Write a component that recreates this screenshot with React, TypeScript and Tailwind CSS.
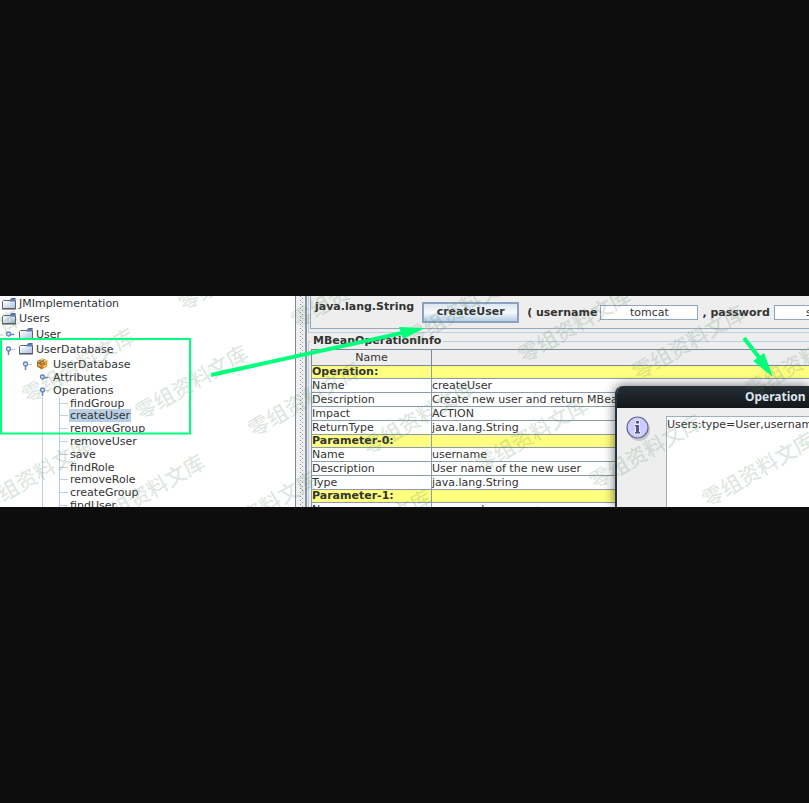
import React from "react";

type Handle = "open" | "closed";

interface Node {
  label: string;
  handle?: Handle;
  selected?: boolean;
}

const rootNodes: (Node & { pad: string })[] = [
  { label: "JMImplementation", pad: "pl-[2px]" },
  { label: "Users", pad: "pl-[2px]" },
  { label: "User", handle: "closed", pad: "pl-[5px]" },
  { label: "UserDatabase", handle: "open", pad: "pl-[5px]" },
];

const operations: Node[] = [
  { label: "findGroup" },
  { label: "createUser", selected: true },
  { label: "removeGroup" },
  { label: "removeUser" },
  { label: "save" },
  { label: "findRole" },
  { label: "removeRole" },
  { label: "createGroup" },
  { label: "findUser" },
];

const info: [string, string][] = [
  ["Operation:", ""],
  ["Name", "createUser"],
  ["Description", "Create new user and return MBean name"],
  ["Impact", "ACTION"],
  ["ReturnType", "java.lang.String"],
  ["Parameter-0:", ""],
  ["Name", "username"],
  ["Description", "User name of the new user"],
  ["Type", "java.lang.String"],
  ["Parameter-1:", ""],
  ["Name", "password"],
];

function FolderIcon() {
  return (
    <svg width="14" height="12" viewBox="0 0 14 12" className="mr-[3px] shrink-0">
      <defs>
        <linearGradient id="folder" x1="0" y1="0" x2="1" y2="1">
          <stop offset="0.1" stopColor="#ffffff" />
          <stop offset="1" stopColor="#a3bfe0" />
        </linearGradient>
      </defs>
      <path d="M0.5 10.5V3.5L1.5 2.5H13.5V10.5Z" fill="url(#folder)" stroke="#62646c" />
      <path d="M7.5 3.5L9 0.5H13.5V3.5Z" fill="#5f7fb5" />
      <path d="M8.5 2L9.5 0.5H13.5" stroke="#55668a" fill="none" />
      <path d="M0 11H14" stroke="#4e5058" />
    </svg>
  );
}

function BeanIcon() {
  return (
    <svg width="12" height="12" viewBox="0 0 12 12" className="mr-1 shrink-0">
      <path d="M1 3L6 0.5L11.5 2.5L11 8.5L6 11.5L1 8.5Z" fill="#e79a2c" />
      <path d="M1 3L6 0.5L11.5 2.5L6.5 5Z" fill="#f6c876" />
      <path d="M1 3L6.5 5L6 11.5L1 8.5Z" fill="#b87220" />
      <path d="M3 2.5L8 4V7M8.5 1.5L4 4.5V8" stroke="#7c684e" fill="none" />
      <path d="M2 6.5L5 8M8 9L10 7" stroke="#fbe3b4" />
    </svg>
  );
}

function HandleIcon({ kind }: { kind: Handle }) {
  return (
    <svg width="14" height="11" viewBox="0 0 14 11" className="shrink-0">
      <path d="M5 5.5H10" stroke="#b8cfe5" />
      <path d={kind === "open" ? "M3.5 6V11" : "M4 5.5H9"} stroke="#6382bf" strokeWidth="1.5" />
      <circle cx="3.5" cy="5" r="2" fill="#dfe9f6" stroke="#6382bf" strokeWidth="1.3" />
    </svg>
  );
}

function Tree() {
  return (
    <nav aria-label="MBeans" className="w-[296px] shrink-0 overflow-hidden border-r border-[#7a8a99] bg-white">
      <ul className="grid h-[61px] auto-rows-fr">
        {rootNodes.map((n) => (
          <li key={n.label} className={`flex min-h-0 items-center ${n.pad}`}>
            {n.handle && <HandleIcon kind={n.handle} />}
            <FolderIcon />
            {n.label}
          </li>
        ))}
      </ul>
      <div className="flex h-[14px] items-center pl-[22px]">
        <HandleIcon kind="open" />
        <BeanIcon />
        <span className="pl-px">UserDatabase</span>
      </div>
      <ul className="grid h-[141px] auto-rows-fr">
        <li className="flex min-h-0 items-center pl-[39px]">
          <HandleIcon kind="closed" />
          Attributes
        </li>
        <li className="flex min-h-0 items-center pl-[39px]">
          <HandleIcon kind="open" />
          Operations
        </li>
        {operations.map((n) => (
          <li key={n.label} className="flex min-h-0 items-center pl-[42px]">
            <span className="w-[17px] self-stretch border-l border-[#b8cfe5]" />
            <span className="flex w-[10px] items-center self-stretch border-l border-[#b8cfe5]">
              <span className="h-px w-2 bg-[#b8cfe5]" />
            </span>
            <span className={n.selected ? "bg-[#b8cfe5] px-px" : "px-px"}>{n.label}</span>
          </li>
        ))}
      </ul>
    </nav>
  );
}

function OperationForm() {
  const field = "h-[15px] w-[98px] shrink-0 border border-[#8fa5bd] bg-white text-center leading-[13px]";
  return (
    <div className="h-[37px] border-b border-l border-[#b8cfe5] pb-[3px] pl-px">
      <form className="flex h-full items-center border-b border-l border-[#9aa9b8] pl-1 font-bold whitespace-nowrap">
        <span className="mr-2 self-start pt-1">java.lang.String</span>
        <button
          type="button"
          className="mr-2 h-[21px] w-[97px] shrink-0 border-2 border-[#8ba3be] bg-linear-to-b from-[#dce7f3] via-[#f6f9fc] to-[#b8cfe5] leading-4"
        >
          createUser
        </button>
        <label htmlFor="username" className="mr-[3px]">( username</label>
        <input id="username" defaultValue="tomcat" className={`${field} mr-1 font-normal`} />
        <label htmlFor="password" className="mr-1">, password</label>
        <input id="password" defaultValue="secret" className={`${field} font-normal`} />
      </form>
    </div>
  );
}

function OperationInfo() {
  return (
    <fieldset className="mt-px min-w-0 border-t border-l border-[#b8cfe5] pl-[2px]">
      <legend className="px-[2px] leading-[14px] font-bold">MBeanOperationInfo</legend>
      <table className="mt-px w-full table-fixed border-collapse">
        <thead>
          <tr className="h-4">
            <th className="w-[120px] border border-[#7a8a99] p-0 font-normal">Name</th>
            <th className="border border-r-0 border-[#7a8a99] p-0 font-normal" aria-label="Value" />
          </tr>
        </thead>
        <tbody>
          {info.map(([name, value], i) => {
            const heading = name.endsWith(":");
            return (
              <tr key={i} className={heading ? "h-[13px] bg-[#ffff80] font-bold" : "h-[14px] bg-white"}>
                <td className="border border-[#8a9cad] p-0 leading-[12px]">{name}</td>
                <td className="overflow-hidden border border-r-0 border-[#8a9cad] p-0 leading-[12px] whitespace-nowrap">
                  {value}
                </td>
              </tr>
            );
          })}
        </tbody>
      </table>
    </fieldset>
  );
}

function ResultDialog() {
  return (
    <section
      role="dialog"
      aria-label="Operation"
      className="absolute top-[90px] right-0 bottom-0 left-[615px] flex flex-col overflow-hidden rounded-tl-lg border-l-2 border-[#26323c] bg-[#eeeeee] shadow-[0_0_12px_rgba(0,0,0,0.6)]"
    >
      <h2 className="h-[22px] shrink-0 bg-linear-to-b from-[#252e34] to-[#12171b] pl-32 font-['Noto_Sans','Open_Sans',sans-serif] text-[12px] leading-[22px] font-bold text-[#dfe5ec]">
        Operation
      </h2>
      <div className="flex min-h-0 flex-1 pt-2 pl-2">
        <svg width="26" height="28" viewBox="0 0 26 28" className="shrink-0">
          <circle cx="14" cy="14" r="11" fill="#c9c9cc" />
          <circle cx="12.5" cy="11.5" r="10.5" fill="#ccccff" stroke="#666699" strokeWidth="1.2" />
          <path d="M11 5H14V7.5H11ZM10 9H14V16H15V17.5H10V16H11V10.5H10Z" fill="#555588" stroke="#f4f4ff" strokeWidth="1.5" paintOrder="stroke" />
        </svg>
        <textarea
          aria-label="Result"
          readOnly
          wrap="off"
          defaultValue="Users:type=User,username"
          className="ml-[15px] min-w-0 flex-1 resize-none overflow-hidden border-t border-l border-[#9dafc0] bg-white pt-px leading-[13px]"
        />
      </div>
    </section>
  );
}

const marks = [-2, -1, 0, 1].flatMap((row) =>
  [-2, -1, 0, 1, 2, 3, 4, 5, 6].map((col) => ({
    left: Math.round(191 + 113.4 * col - 43 * row),
    top: Math.round(86 + 17.3 * col + 109 * row),
  })),
);

function Watermark() {
  return (
    <div aria-hidden="true" className="pointer-events-none absolute inset-0 overflow-hidden">
      {marks.map((m, i) => (
        <span
          key={i}
          style={m}
          className="absolute -translate-x-1/2 -translate-y-1/2 -rotate-30 font-['Noto_Sans_CJK_SC',sans-serif] text-[21px] leading-none font-medium whitespace-nowrap text-[#4f7f5a]/20"
        >
          零组资料文库
        </span>
      ))}
    </div>
  );
}

function Annotations() {
  return (
    <svg width="809" height="211" viewBox="0 0 809 211" className="pointer-events-none absolute top-0 left-0">
      <g stroke="#00ff7b" fill="none">
        <rect x="1" y="43" width="189" height="94.5" strokeWidth="2" />
        <path d="M211 79L402 37" strokeWidth="4" />
        <path d="M744 42L761 64" strokeWidth="4" />
      </g>
      <path d="M425 32L399 31L403 43Z" fill="#00ff7b" />
      <path d="M773 81L764 57L753 65Z" fill="#00ff7b" />
    </svg>
  );
}

function Divider() {
  return (
    <div className="flex w-[12px] shrink-0 pl-[3px]">
      <svg width="6" height="100%" aria-hidden="true">
        <defs>
          <pattern id="bumps" width="6" height="4" patternUnits="userSpaceOnUse">
            <rect x="1" y="0" width="1" height="1" fill="#8796ab" />
            <rect x="3" y="2" width="1" height="1" fill="#8796ab" />
          </pattern>
        </defs>
        <rect width="6" height="100%" fill="url(#bumps)" />
      </svg>
      <div className="w-[2px] bg-[#8a95a3]" />
    </div>
  );
}

export default function App() {
  return (
    <div className="flex min-h-screen items-center bg-[#0d0d0d] font-['DejaVu_Sans',sans-serif] text-[11px] leading-[13px] text-[#333333]">
      <main className="relative flex h-[211px] w-full overflow-hidden bg-[#eeeeee]">
        <Tree />
        <Divider />
        <div className="min-w-0 flex-1 overflow-hidden">
          <OperationForm />
          <OperationInfo />
        </div>
        <ResultDialog />
        <Watermark />
        <Annotations />
      </main>
    </div>
  );
}
